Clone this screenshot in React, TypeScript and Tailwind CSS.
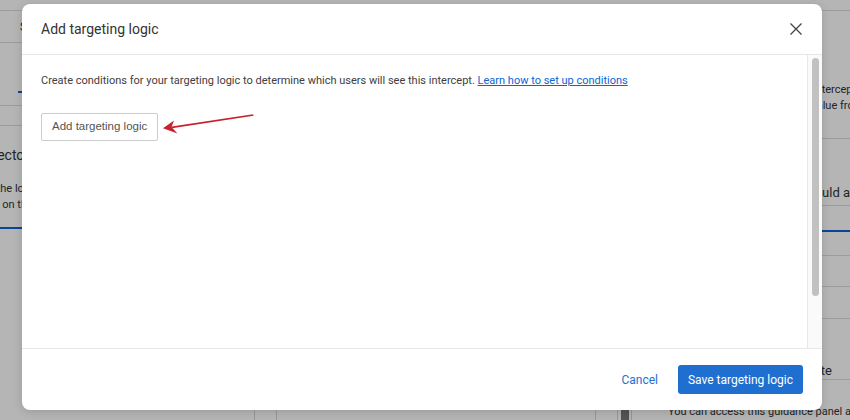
import React from 'react';

const font = { fontFamily: 'Roboto, "Liberation Sans", sans-serif' };

const BackgroundPage: React.FC = () => (
  <div className="flex flex-col h-full bg-white text-[#333]">
    <div className="h-[11px] border-b border-[#dcdcdc] shrink-0" />
    <div className="flex flex-1 min-h-0">
      {/* left settings column */}
      <div className="w-[255px] border-r border-[#d6d6d6] flex flex-col shrink-0">
        <div className="h-[32px] border-b border-[#dcdcdc] flex items-center pl-[20px] text-[12px]">
          Settings
        </div>
        <div className="h-[63px] border-b border-[#dcdcdc] flex flex-col justify-end pb-[12px]">
          <div className="ml-[18px] w-[40px] h-[2px] bg-[#0b65d3]" />
        </div>
        <div className="h-[20px] border-b border-[#dcdcdc]" />
        <div className="-ml-[22px] pt-[20px]">
          <div className="text-[14px] leading-[18px]">Selector</div>
          <div className="mt-[17px] text-[11px] leading-[16px]">Set the logic for this intercept</div>
          <div className="text-[11px] leading-[16px]">runs on the page</div>
        </div>
        <div className="mt-[14px] h-[2px] bg-[#0b65d3]" />
      </div>
      {/* middle editor */}
      <div className="flex-1 flex">
        <div className="flex-1 px-[21px]">
          <div className="h-full border-x border-[#d6d6d6]" />
        </div>
        <div className="w-[14px] border-l border-[#d6d6d6] flex justify-center items-end">
          <div className="w-[8px] h-[30px] bg-[#777]" />
        </div>
      </div>
      {/* right guidance column */}
      <div className="w-[219px] border-l border-[#d6d6d6] flex flex-col shrink-0 text-[#333]">
        <div className="h-[131px] border-b border-[#dcdcdc] pl-[15px] pt-[71px] text-[11px] leading-[16px] whitespace-nowrap">
          <div>Decide which visitors will see this intercept</div>
          <div className="ml-[117px]">Specify a value from the page</div>
        </div>
        <div className="h-[68px] border-b border-[#dcdcdc] pl-[57px] pt-[46px] text-[13px] leading-[16px] whitespace-nowrap">
          When the intercept should appear
        </div>
        <div className="h-[26px]" />
        <div className="h-[2px] bg-[#0b65d3]" />
        <div className="h-[25px] border-b border-[#dcdcdc]" />
        <div className="h-[33px] border-b border-[#dcdcdc]" />
        <div className="h-[34px] border-b border-[#dcdcdc]" />
        <div className="h-[62px] border-b border-[#dcdcdc] flex justify-end pr-[18px] pt-[44px] text-[13px] leading-[16px] whitespace-nowrap">
          Display only on this website
        </div>
        <div className="pl-[36px] pt-[24px] text-[11px] leading-[16px] whitespace-nowrap">
          You can access this guidance panel at any time
        </div>
      </div>
    </div>
  </div>
);

const Arrow: React.FC = () => (
  <svg
    className="absolute left-[128px] top-[104px]"
    width="110"
    height="30"
    viewBox="0 0 110 30"
  >
    <path d="M103 6.2 L103.6 7.8 L22 20.2 L21.6 18.4 Z" fill="#c8222f" />
    <path d="M13 20.2 L24 12.6 L21.6 19 L27.4 25.6 Z" fill="#c8222f" />
  </svg>
);

const TargetingModal: React.FC = () => (
  <div className="relative w-[800px] h-[406px] bg-white rounded-[8px] flex flex-col shadow-[0_2px_10px_rgba(0,0,0,0.15)]">
    {/* Header */}
    <div className="h-[51px] shrink-0 border-b border-[#e6e6e6] flex items-center justify-between pl-[19px] pr-[20px]">
      <h2 className="text-[14px] text-[#333]" style={font}>Add targeting logic</h2>
      <svg width="12" height="12" viewBox="0 0 12 12">
        <path d="M0.5 0.5 L11.5 11.5 M11.5 0.5 L0.5 11.5" stroke="#444" strokeWidth="1.3" />
      </svg>
    </div>

    {/* Body */}
    <div className="flex-1 flex min-h-0">
      <div className="flex-1 pl-[19px] pt-[18px]">
        <p className="text-[11px] leading-[16px] text-[#404040]" style={font}>
          Create conditions for your targeting logic to determine which users will see this intercept.{' '}
          <a className="text-[#0b65d3] underline">Learn how to set up conditions</a>
        </p>
        <button
          className="mt-[24px] h-[28px] px-[10px] border border-[#cccccc] rounded-[2px] bg-white text-[11.5px] text-[#555]"
          style={{ fontFamily: '"Liberation Sans", Arial, sans-serif' }}
        >
          Add targeting logic
        </button>
      </div>
      <div className="w-[15px] border-l border-[#e8e8e8] bg-[#fafafa] flex justify-center">
        <div className="mt-[3px] w-[7px] h-[238px] rounded-full bg-[#c1c1c1]" />
      </div>
    </div>

    {/* Footer */}
    <div className="h-[62px] shrink-0 border-t border-[#e8e8e8] flex items-center justify-end gap-[20px] pr-[19px]" style={font}>
      <button className="text-[12px] text-[#1f6fd1]">Cancel</button>
      <button className="h-[29px] w-[125px] rounded-[3px] bg-[#1f6fd1] text-white text-[12px]">
        Save targeting logic
      </button>
    </div>

    <Arrow />
  </div>
);

export default function App() {
  return (
    <div className="relative w-[850px] h-[420px] overflow-hidden" style={font}>
      <BackgroundPage />
      <div className="absolute inset-0 bg-[rgba(0,0,0,0.29)] pl-[22px] pt-[4px]">
        <TargetingModal />
      </div>
    </div>
  );
}
